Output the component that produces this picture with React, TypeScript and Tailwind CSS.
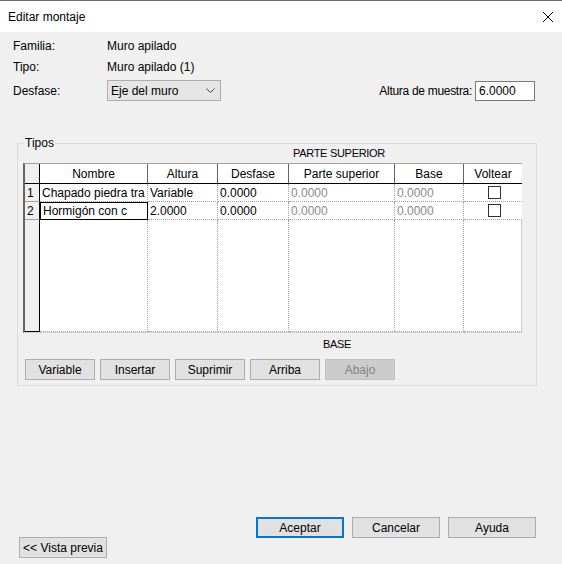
import React from "react";

const cols = "grid-cols-[15px_108px_70px_71px_106px_69px_58px]";

function Btn({ children, w = "w-[70px]", disabled = false, primary = false }: { children: React.ReactNode; w?: string; disabled?: boolean; primary?: boolean }) {
  return (
    <div
      className={`${w} h-[21px] flex items-center justify-center text-[12px] ${
        disabled
          ? "bg-[#cccccc] border border-[#bfbfbf] text-[#838383]"
          : primary
          ? "bg-[#e1e1e1] border-2 border-[#0078d7] text-black"
          : "bg-[#e1e1e1] border border-[#adadad] text-black"
      }`}
    >
      {children}
    </div>
  );
}

function Check() {
  return <div className="w-[13px] h-[13px] border border-[#333333] bg-white" />;
}

export default function App() {
  const hdr = "h-[20px] flex items-center justify-center border-r border-[#646464] border-b border-b-black bg-white";
  const cell = "h-[18px] flex items-center pl-[2px] border-r border-dotted border-r-[#a0a0a0] border-b border-dotted border-b-[#a0a0a0] bg-white whitespace-nowrap overflow-hidden";
  const rh = "h-[18px] flex items-center pl-[2px] border-r border-r-black border-b border-b-[#a0a0a0] bg-[#f0f0f0]";
  return (
    <div className="w-[562px] h-[564px] bg-[#f0f0f0] flex flex-col text-[12px] text-black" style={{ fontFamily: '"Liberation Sans", Arial, sans-serif' }}>
      <div className="h-[32px] bg-white border-t border-[#6e6e6e] flex items-center justify-between pl-[8px] pr-[6px]">
        <span className="text-[12px]">Editar montaje</span>
        <svg width="12" height="12" viewBox="0 0 12 12" className="mr-[2px]">
          <path d="M1 1 L11 11 M11 1 L1 11" stroke="#000" strokeWidth="1" />
        </svg>
      </div>
      <div className="flex flex-col px-[13px] pt-[6px]">
        <div className="h-[16px] flex items-center">
          <span className="w-[94px]">Familia:</span>
          <span>Muro apilado</span>
        </div>
        <div className="h-[16px] mt-[5px] flex items-center">
          <span className="w-[94px]">Tipo:</span>
          <span>Muro apilado (1)</span>
        </div>
        <div className="mt-[5px] flex items-center h-[21px]">
          <span className="w-[94px]">Desfase:</span>
          <div className="w-[114px] h-[21px] bg-[#e5e5e5] border border-[#adadad] flex items-center justify-between pl-[3px] pr-[5px]">
            <span>Eje del muro</span>
            <svg width="9" height="6" viewBox="0 0 9 6">
              <path d="M0.5 0.5 L4.5 4.5 L8.5 0.5" stroke="#444" strokeWidth="1" fill="none" />
            </svg>
          </div>
          <div className="ml-auto flex items-center mr-[14px]">
            <span className="mr-[3px] tracking-[-0.3px]">Altura de muestra:</span>
            <div className="w-[60px] h-[20px] bg-white border border-[#7a7a7a] flex items-center pl-[3px]">6.0000</div>
          </div>
        </div>
      </div>
      <div className="ml-[17px] mt-[42px] w-[520px] h-[243px] border border-[#dcdcdc] relative flex flex-col pt-[3px] px-[5px]">
        <span className="absolute left-[6px] top-[-9px] bg-[#f0f0f0] px-[1px] leading-[16px]">Tipos</span>
        <div className="h-[13px] flex items-center pl-[270px] text-[11px] tracking-[-0.3px]">PARTE SUPERIOR</div>
        <div className="mt-[3px] w-[499px] h-[170px] border-l-2 border-l-[#646464] border-t border-t-[#a0a0a0] border-r border-r-[#d0d0d0] border-b border-b-[#d0d0d0] bg-white">
          <div className={`grid ${cols} grid-rows-[20px_18px_18px_112px]`}>
            <div className="h-[20px] border-r border-r-black border-b border-b-black bg-[#f0f0f0]" />
            <div className={hdr}>Nombre</div>
            <div className={hdr}>Altura</div>
            <div className={hdr}>Desfase</div>
            <div className={hdr}>Parte superior</div>
            <div className={hdr}>Base</div>
            <div className={hdr + " border-r-0"}>Voltear</div>

            <div className={rh}>1</div>
            <div className={cell}>Chapado piedra tra</div>
            <div className={cell}>Variable</div>
            <div className={cell}>0.0000</div>
            <div className={cell + " text-[#8a8a8a]"}>0.0000</div>
            <div className={cell + " text-[#8a8a8a]"}>0.0000</div>
            <div className={cell + " border-r-0 justify-center pl-0"}><Check /></div>

            <div className={rh}>2</div>
            <div className="h-[18px] flex items-center pl-[2px] border border-black bg-white whitespace-nowrap">Hormigón con c</div>
            <div className={cell}>2.0000</div>
            <div className={cell}>0.0000</div>
            <div className={cell + " text-[#8a8a8a]"}>0.0000</div>
            <div className={cell + " text-[#8a8a8a]"}>0.0000</div>
            <div className={cell + " border-r-0 justify-center pl-0"}><Check /></div>

            <div className="border-r border-r-black border-b border-b-black bg-[#f0f0f0]" />
            <div className="border-r border-dotted border-r-[#a0a0a0] border-b border-b-[#a0a0a0]" />
            <div className="border-r border-dotted border-r-[#a0a0a0] border-b border-b-[#a0a0a0]" />
            <div className="border-r border-dotted border-r-[#a0a0a0] border-b border-b-[#a0a0a0]" />
            <div className="border-r border-dotted border-r-[#a0a0a0] border-b border-b-[#a0a0a0]" />
            <div className="border-r border-dotted border-r-[#a0a0a0] border-b border-b-[#a0a0a0]" />
            <div className="border-b border-dotted border-b-[#a0a0a0]" />
          </div>
        </div>
        <div className="h-[22px] flex items-center pl-[300px] text-[11px] tracking-[-0.3px]">BASE</div>
        <div className="flex gap-[5px] pl-[2px] mt-[4px]">
          <Btn>Variable</Btn>
          <Btn>Insertar</Btn>
          <Btn>Suprimir</Btn>
          <Btn>Arriba</Btn>
          <Btn disabled>Abajo</Btn>
        </div>
      </div>
      <div className="flex justify-end gap-[8px] pr-[26px] mt-[131px]">
        <Btn w="w-[88px]" primary>Aceptar</Btn>
        <Btn w="w-[88px]">Cancelar</Btn>
        <Btn w="w-[88px]">Ayuda</Btn>
      </div>
      <div className="pl-[19px] mt-[-1px]">
        <Btn w="w-[88px]">&lt;&lt; Vista previa</Btn>
      </div>
    </div>
  );
}
